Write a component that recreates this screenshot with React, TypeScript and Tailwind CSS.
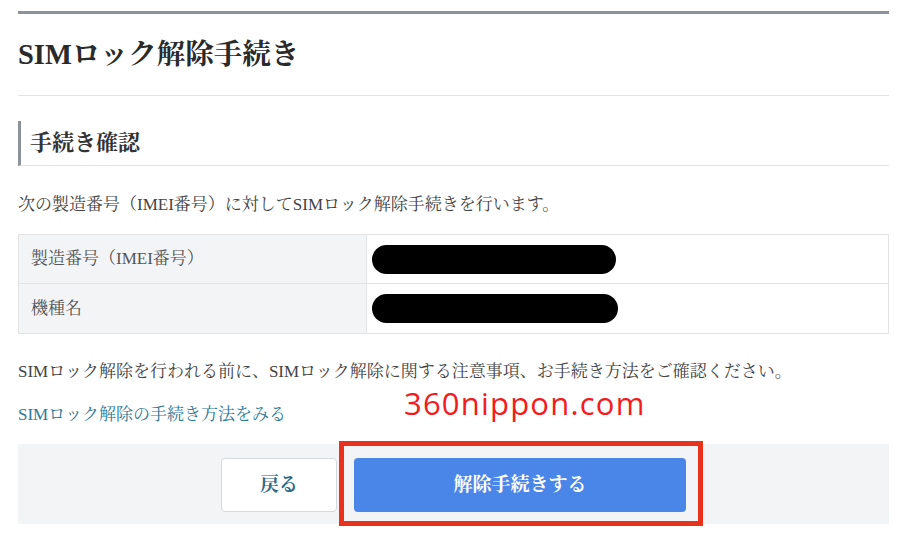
import React from "react";

const serif = {
  fontFamily:
    '"Liberation Serif", "Noto Serif CJK JP", "Noto Sans CJK JP", serif',
};

export default function App() {
  return (
    <div
      className="relative w-[900px] h-[538px] bg-white overflow-hidden pl-[18px] pr-[11px] pt-[11px] text-[#333]"
      style={serif}
    >
      <div className="border-t-[3px] border-[#8c919a]" />
      <h1 className="pt-[21px] pb-[20px] text-[28.5px] leading-[40px] font-bold text-[#2a2a2a] border-b border-[#e3e3e3]">
        SIMロック解除手続き
      </h1>

      <div className="mt-[25px] h-[45px] flex items-center border-l-[3px] border-[#8c919a] border-b border-b-[#e3e3e3] pl-[9px]">
        <h2 className="text-[22px] leading-[30px] font-bold text-[#333]">
          手続き確認
        </h2>
      </div>

      <p className="mt-[27px] text-[17px] leading-[24px] text-[#444]">
        次の製造番号（IMEI番号）に対してSIMロック解除手続きを行います。
      </p>

      <div className="mt-[17px] border border-[#e3e3e3] text-[17px] text-[#555]">
        <div className="flex h-[49px] border-b border-[#e3e3e3]">
          <div className="w-[348px] bg-[#f3f4f6] border-r border-[#e3e3e3] flex items-center pl-[12px]">
            製造番号（IMEI番号）
          </div>
          <div className="flex-1 flex items-center pl-[5px]">
            <div className="w-[244px] h-[29px] rounded-full bg-black" />
          </div>
        </div>
        <div className="flex h-[49px]">
          <div className="w-[348px] bg-[#f3f4f6] border-r border-[#e3e3e3] flex items-center pl-[12px]">
            機種名
          </div>
          <div className="flex-1 flex items-center pl-[5px]">
            <div className="w-[246px] h-[29px] rounded-full bg-black" />
          </div>
        </div>
      </div>

      <p className="mt-[26px] text-[17px] leading-[24px] text-[#444]">
        SIMロック解除を行われる前に、SIMロック解除に関する注意事項、お手続き方法をご確認ください。
      </p>

      <p className="mt-[19px] text-[17px] leading-[24px] text-[#2e7a98]">
        SIMロック解除の手続き方法をみる
      </p>

      <div className="mt-[17px] h-[80px] bg-[#f3f4f6] flex justify-center items-start pt-[14px] gap-[17px]">
        <button className="w-[116px] h-[54px] bg-white border border-[#d5d8dc] rounded-[4px] text-[19px] font-bold text-[#2f6a86]">
          戻る
        </button>
        <div className="relative">
          <button className="w-[332px] h-[54px] bg-[#4a86e8] rounded-[4px] text-[19px] font-bold text-white">
            解除手続きする
          </button>
          <div className="absolute -left-[15px] -right-[17px] -top-[17px] -bottom-[14px] border-[5px] border-[#e8321e]" />
        </div>
      </div>

      <div
        className="absolute left-[404px] top-[382px] text-[31px] leading-[42px] tracking-[1.2px] text-[#f21c1c]"
        style={{ fontFamily: '"Open Sans", "Noto Sans", sans-serif' }}
      >
        360nippon.com
      </div>
    </div>
  );
}
